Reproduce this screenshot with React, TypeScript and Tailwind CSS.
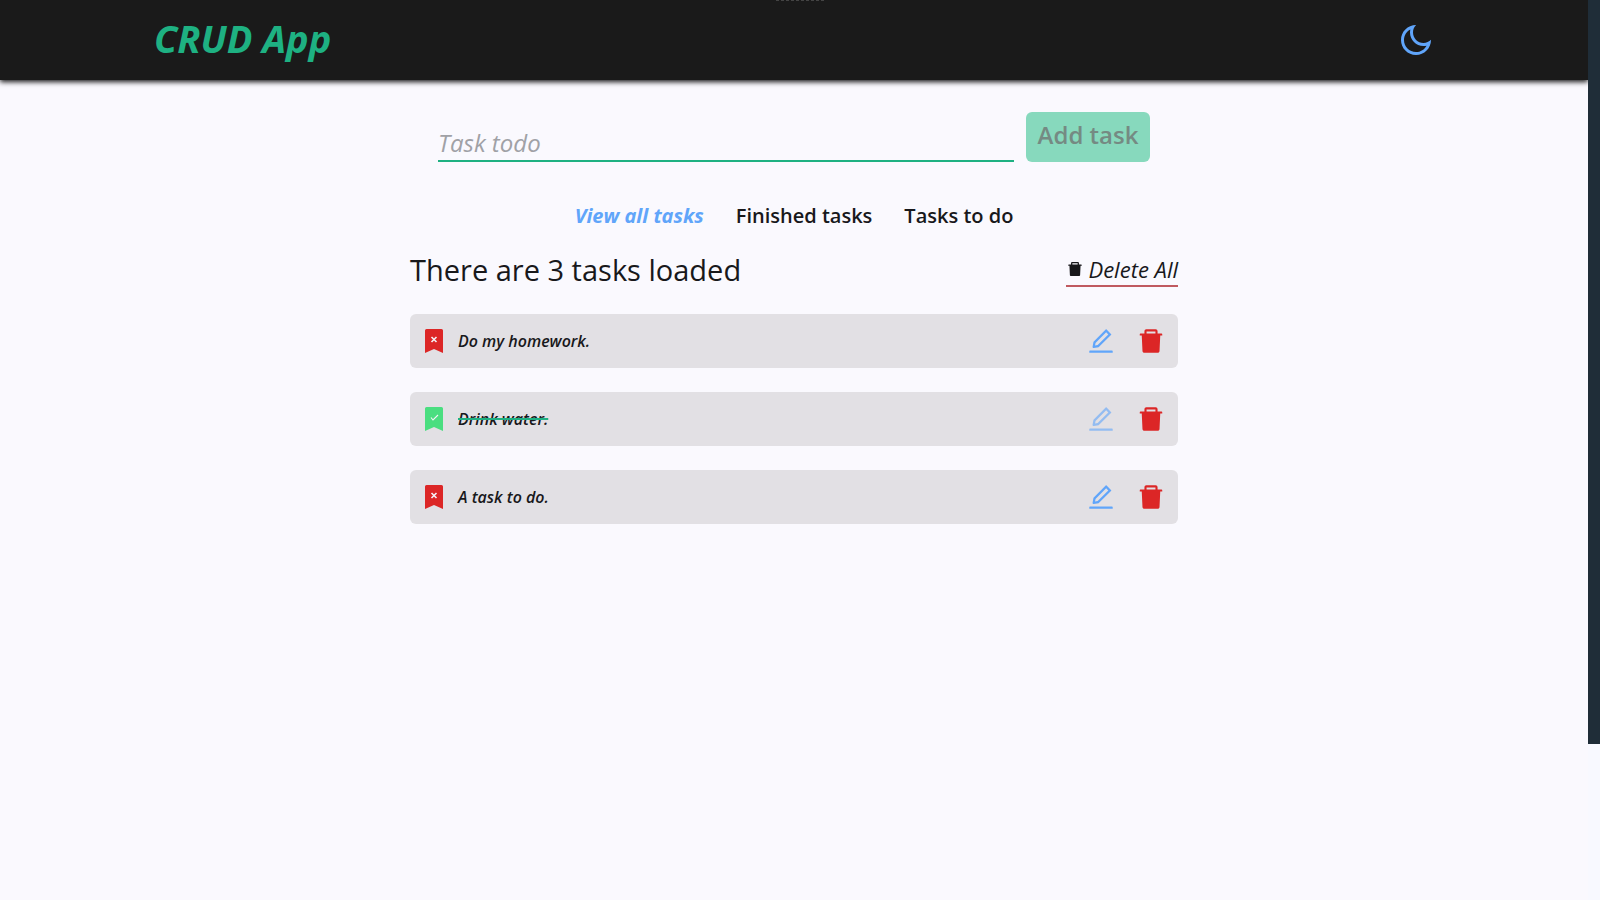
import { useState } from "react";
import { AiFillDelete, AiOutlineEdit } from "react-icons/ai";
import { RiMoonLine } from "react-icons/ri";

type Task = { id: number; text: string; done: boolean };

const tasks: Task[] = [
  { id: 1, text: "Do my homework.", done: false },
  { id: 2, text: "Drink water.", done: true },
  { id: 3, text: "A task to do.", done: false },
];

const tabs = ["View all tasks", "Finished tasks", "Tasks to do"];

function BookmarkIcon({ done }: { done: boolean }) {
  return (
    <svg viewBox="0 0 24 24" className="size-6" aria-hidden="true">
      <path
        d="M4.5 0h15A1.5 1.5 0 0 1 21 1.500V24l-9-4-9 4V1.500A1.500 1.500 0 0 1 4.500 0Z"
        fill={done ? "#4ade80" : "#dc2626"}
      />
      <path
        d={done ? "M9 10.500l2 2.500 5-5" : "M9.500 8l5 5m0-5l-5 5"}
        fill="none"
        stroke="#f4f2f6"
        strokeWidth={done ? 1.1 : 1.6}
      />
    </svg>
  );
}

function TaskRow({ task }: { task: Task }) {
  return (
    <li className="flex h-[54px] items-center rounded-md bg-[#e2e0e4] px-3">
      <button type="button" aria-label={task.done ? "Mark as to do" : "Mark as finished"}>
        <BookmarkIcon done={task.done} />
      </button>
      <p
        className={
          task.done
            ? "ml-3 flex-1 text-base font-semibold italic line-through decoration-[#1eb182] decoration-2"
            : "ml-3 flex-1 text-base font-semibold italic"
        }
      >
        {task.text}
      </p>
      <div className="flex items-center gap-5">
        <button
          type="button"
          aria-label="Edit task"
          disabled={task.done}
          className="text-[#60a5fa] disabled:opacity-60"
        >
          <AiOutlineEdit className="size-[30px]" />
        </button>
        <button type="button" aria-label="Delete task" className="text-[#dc2626]">
          <AiFillDelete className="size-[30px]" />
        </button>
      </div>
    </li>
  );
}

export default function App() {
  const [active, setActive] = useState(tabs[0]);
  const [text, setText] = useState("");

  return (
    <div className="flex min-h-screen bg-[#faf9fe] font-['Open_Sans',sans-serif] text-[#18181b]">
      <div className="min-w-0 flex-1">
        <header className="relative bg-[#1a1a1a] shadow-[0_2px_5px_rgba(0,0,0,0.9)]">
          <div className="absolute top-0 left-1/2 w-12 -translate-x-3/8 border-t border-dashed border-[#444444]" />
          <div className="mx-auto flex h-20 max-w-7xl items-center justify-between">
            <h1 className="pb-1 text-[38px] leading-10 font-bold text-[#1eb182] italic">CRUD App</h1>
            <button type="button" aria-label="Toggle dark mode" className="text-[#60a5fa]">
              <RiMoonLine className="size-9" />
            </button>
          </div>
        </header>

        <main className="mx-auto max-w-3xl pt-8">
          <form className="mx-7 flex items-end gap-3" onSubmit={(e) => e.preventDefault()}>
            <input
              type="text"
              aria-label="Task todo"
              placeholder="Task todo"
              value={text}
              onChange={(e) => setText(e.target.value)}
              className="min-w-0 flex-1 border-b-2 border-[#1eb182] bg-transparent text-2xl leading-[34px] italic outline-none placeholder:text-[#a0a1a6]"
            />
            <button
              type="submit"
              disabled={!text}
              className="h-[50px] w-[124px] rounded-md bg-[#87d9bd] pb-1 text-2xl font-semibold text-[#758a83]"
            >
              Add task
            </button>
          </form>

          <nav className="mt-10 flex justify-center gap-8">
            {tabs.map((tab) => (
              <button
                key={tab}
                type="button"
                onClick={() => setActive(tab)}
                className={
                  tab === active
                    ? "text-xl leading-7 font-bold text-[#60a5fa] italic"
                    : "text-xl leading-7 font-semibold"
                }
              >
                {tab}
              </button>
            ))}
          </nav>

          <div className="mt-5 flex items-center justify-between">
            <h2 className="text-[29px] leading-10">There are 3 tasks loaded</h2>
            <button
              type="button"
              className="flex items-center gap-1 border-b-2 border-[#c05a60] text-[22px] leading-8 italic"
            >
              <AiFillDelete className="size-[18px]" />
              Delete All
            </button>
          </div>

          <ul className="mt-6 flex flex-col gap-6">
            {tasks.map((task) => (
              <TaskRow key={task.id} task={task} />
            ))}
          </ul>
        </main>
      </div>
      <div className="z-10 w-3 bg-[#f8f9ff]">
        <div className="h-[744px] bg-[#1f2d38]" />
      </div>
    </div>
  );
}
